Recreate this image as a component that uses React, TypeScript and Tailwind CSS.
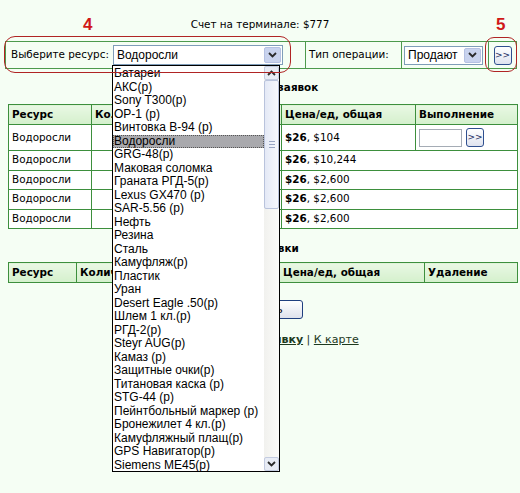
import React from 'react';

const resources = [
  'Батареи',
  'АКС(р)',
  'Sony T300(р)',
  'OP-1 (р)',
  'Винтовка В-94 (р)',
  'Водоросли',
  'GRG-48(р)',
  'Маковая соломка',
  'Граната РГД-5(р)',
  'Lexus GX470 (р)',
  'SAR-5.56 (р)',
  'Нефть',
  'Резина',
  'Сталь',
  'Камуфляж(р)',
  'Пластик',
  'Уран',
  'Desert Eagle .50(р)',
  'Шлем 1 кл.(р)',
  'РГД-2(р)',
  'Steyr AUG(р)',
  'Камаз (р)',
  'Защитные очки(р)',
  'Титановая каска (р)',
  'STG-44 (р)',
  'Пейнтбольный маркер (р)',
  'Бронежилет 4 кл.(р)',
  'Камуфляжный плащ(р)',
  'GPS Навигатор(р)',
  'Siemens ME45(р)',
];

const orders = [
  { res: 'Водоросли', unit: '$26', total: '$104', action: true },
  { res: 'Водоросли', unit: '$26', total: '$10,244' },
  { res: 'Водоросли', unit: '$26', total: '$2,600' },
  { res: 'Водоросли', unit: '$26', total: '$2,600' },
  { res: 'Водоросли', unit: '$26', total: '$2,600' },
];

function Chevron({ up = false }: { up?: boolean }) {
  return (
    <svg width="9" height="6" viewBox="0 0 9 6" className={up ? 'rotate-180' : ''}>
      <path d="M1 1 L4.5 4.5 L8 1" fill="none" stroke="#2a2a2a" strokeWidth="1.8" />
    </svg>
  );
}

function SelectArrow() {
  return (
    <div className="flex items-center justify-center w-[17px] h-full bg-[#c9d3ee] border border-[#b5c1e2] rounded-[2px]">
      <Chevron />
    </div>
  );
}

function SmallButton() {
  return (
    <button className="flex items-center justify-center w-[18px] h-[19px] rounded-[3px] border border-[#2f4f8f] bg-gradient-to-b from-white to-[#dfe3ef] text-[9px] leading-none text-[#1a2a60] font-['DejaVu_Sans',sans-serif]">
      &gt;&gt;
    </button>
  );
}

function Dropdown() {
  return (
    <div className="absolute left-[112px] top-[65px] w-[168px] h-[407px] flex border border-black bg-white font-['Liberation_Sans',sans-serif] text-[12px] text-black">
      <div className="flex-1 flex flex-col pt-px">
        {resources.map((r, i) => (
          <div
            key={i}
            className={`h-[13.5px] leading-[13.5px] pl-[1px] whitespace-nowrap ${
              i === 5 ? 'bg-[#a9a9ad] outline outline-1 outline-dotted outline-[#555] -outline-offset-1' : ''
            }`}
          >
            {r}
          </div>
        ))}
      </div>
      <div className="w-[15px] flex flex-col bg-gradient-to-r from-[#f1f1ee] to-[#fbfbf9]">
        <div className="h-[14px] flex items-center justify-center bg-[#e8ecf5] border border-[#c3cbe0] rounded-[2px]">
          <Chevron up />
        </div>
        <div className="h-[129px] flex items-center justify-center bg-gradient-to-r from-[#e4e9f6] to-[#f7f8fc] border border-[#b9c3dc] rounded-[2px]">
          <div className="flex flex-col gap-[2px]">
            <div className="w-[6px] h-px bg-[#9aa6c4]" />
            <div className="w-[6px] h-px bg-[#9aa6c4]" />
            <div className="w-[6px] h-px bg-[#9aa6c4]" />
          </div>
        </div>
        <div className="flex-1" />
        <div className="h-[14px] flex items-center justify-center bg-[#e8ecf5] border border-[#c3cbe0] rounded-[2px]">
          <Chevron />
        </div>
      </div>
    </div>
  );
}

export default function App() {
  const cell = 'border border-[#3d8f3d] px-[3px]';
  const head = `${cell} bg-gradient-to-b from-[#e9f8e4] to-[#d4f0cc] text-left font-bold h-[20px] whitespace-nowrap overflow-hidden`;

  return (
    <div className="relative w-[520px] h-[493px] overflow-hidden bg-[#f5fef4] text-[10.4px] text-black font-['DejaVu_Sans',sans-serif]">
      <div className="pt-[17px] h-[40px] text-center leading-[14px]">Счет на терминале: $777</div>

      {/* toolbar */}
      <div className="ml-[5px] mr-[3px] h-[28px] mt-px flex border border-[#4d9a4d]">
        <div className="w-[299px] flex items-center pl-[5px] gap-[4px]">
          <span>Выберите ресурс:</span>
          <div className="w-[170px] h-[20px] flex items-center justify-between bg-white border border-[#7f9db9] pl-[3px] pr-[1px] py-[1px] text-[12px] font-['Liberation_Sans',sans-serif]">
            <span>Водоросли</span>
            <SelectArrow />
          </div>
        </div>
        <div className="w-[96px] flex items-center pl-[3px] border-l border-[#4d9a4d]">Тип операции:</div>
        <div className="w-[87px] flex items-center pl-[2px] border-l border-[#4d9a4d]">
          <div className="w-[79px] h-[19px] flex items-center justify-between bg-white border border-[#7f9db9] pl-[3px] pr-[1px] py-[1px] text-[12px] font-['Liberation_Sans',sans-serif]">
            <span>Продают</span>
            <SelectArrow />
          </div>
        </div>
        <div className="flex-1 flex items-center justify-center border-l border-[#4d9a4d]">
          <SmallButton />
        </div>
      </div>

      <div className="mt-[11px] text-center font-bold leading-[14px]">Список всех заявок</div>

      <table className="mt-[10px] ml-[8px] w-[509px] border-collapse table-fixed bg-white">
        <colgroup>
          <col className="w-[83px]" />
          <col className="w-[95px]" />
          <col className="w-[95px]" />
          <col className="w-[134px]" />
          <col className="w-[102px]" />
        </colgroup>
        <thead>
          <tr>
            <th className={head}>Ресурс</th>
            <th className={head}>Количество</th>
            <th className={head}></th>
            <th className={head}>Цена/ед, общая</th>
            <th className={head}>Выполнение</th>
          </tr>
        </thead>
        <tbody>
          {orders.map((o, i) => (
            <tr key={i} className={o.action ? 'h-[26px]' : 'h-[19.5px]'}>
              <td className={cell}>{o.res}</td>
              <td className={cell}></td>
              <td className={cell}></td>
              <td className={cell} colSpan={o.action ? 1 : 2}>
                <b>{o.unit}</b>, {o.total}
              </td>
              {o.action && (
                <td className={cell}>
                  <div className="flex items-center gap-[4px]">
                    <div className="w-[43px] h-[18px] bg-white border border-[#a5acb5]" />
                    <SmallButton />
                  </div>
                </td>
              )}
            </tr>
          ))}
        </tbody>
      </table>

      <div className="mt-[12px] text-center font-bold leading-[14px]">Ваши заявки</div>

      <table className="mt-[7px] ml-[8px] w-[509px] border-collapse table-fixed">
        <colgroup>
          <col className="w-[68px]" />
          <col className="w-[100px]" />
          <col className="w-[103px]" />
          <col className="w-[145px]" />
          <col className="w-[93px]" />
        </colgroup>
        <thead>
          <tr>
            <th className={head}>Ресурс</th>
            <th className={head}>Количество</th>
            <th className={head}></th>
            <th className={head}>Цена/ед, общая</th>
            <th className={head}>Удаление</th>
          </tr>
        </thead>
      </table>

      <div className="mt-[17px] flex justify-center">
        <button className="w-[86px] h-[19px] rounded-[3px] border border-[#1f3f7f] bg-gradient-to-b from-white to-[#dfe2ec] text-[10.4px] leading-none">
          Удалить
        </button>
      </div>

      <div className="mt-[14px] text-center text-[11px] leading-[14px] text-[#1e3a1e]">
        <a className="font-bold underline">Создать новую заявку</a> | <a className="underline">К карте</a>
      </div>

      <Dropdown />

      {/* annotations */}
      <div className="absolute left-[83px] top-[12px] text-[17px] font-bold text-[#d01818] font-['Liberation_Sans',sans-serif]">4</div>
      <div className="absolute left-[496px] top-[12px] text-[17px] font-bold text-[#d01818] font-['Liberation_Sans',sans-serif]">5</div>
      <div className="absolute left-[4px] top-[36px] w-[287px] h-[37px] rounded-[11px] border-[1.5px] border-[#b02424]" />
      <div className="absolute left-[485px] top-[37px] w-[32px] h-[35px] rounded-[9px] border-[1.5px] border-[#b02424]" />
    </div>
  );
}
